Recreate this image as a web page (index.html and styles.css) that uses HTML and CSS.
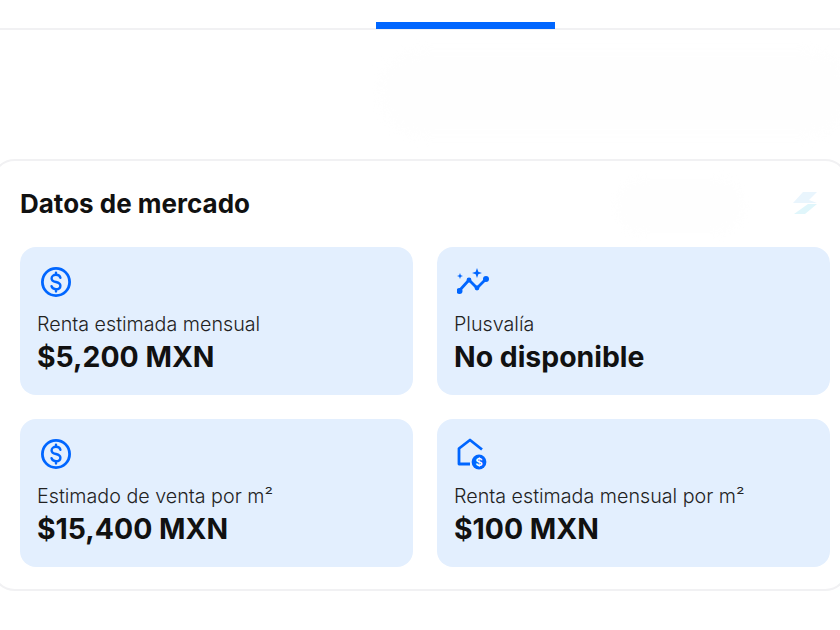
FILE: index.html
```html
<!DOCTYPE html>
<html lang="es">
<head>
    <meta charset="UTF-8">
    <title>Datos de mercado</title>
    <link rel="stylesheet" href="styles.css">
</head>
<body>
    <div class="tabs">
        <div class="tab-active"></div>
    </div>

    <div class="ghost-share"></div>

    <div class="card">
        <div class="ghost-badge"></div>
        <div class="card-head">
            <h2 class="card-title">Datos de mercado</h2>
            <svg class="bolt" width="24" height="23" viewBox="0 0 24 23">
                <path d="M10 0h14l-8 8 8 3H0z" fill="#e9f5fd"/>
                <path d="M15 12h9L12 22H1z" fill="#e0f6fb"/>
            </svg>
        </div>

        <div class="grid">
            <div class="tile">
                <svg class="icon" width="32" height="32" viewBox="0 0 32 32" fill="none" stroke="#0066ff" stroke-width="2.800" stroke-linecap="round">
                    <circle cx="16" cy="16" r="13.600"/>
                    <path d="M20.400 11.800c-.4-1.800-2.200-3-4.400-3-2.500 0-4.400 1.500-4.400 3.600 0 2.300 2 3 4.400 3.600s4.400 1.400 4.400 3.700c0 2.100-1.900 3.500-4.400 3.500-2.300 0-4.100-1.200-4.500-3.100M16 6.600v2.200M16 23.200v2.200" stroke-width="2.400"/>
                </svg>
                <div class="label">Renta estimada mensual</div>
                <div class="value">$5,200 MXN</div>
            </div>

            <div class="tile">
                <svg class="icon" width="32" height="32" viewBox="0 0 32 32" fill="none">
                    <path d="M2 25 12 14l8 8 9-9" stroke="#0066ff" stroke-width="2.800" stroke-linecap="round" stroke-linejoin="round"/>
                    <circle cx="2.500" cy="25" r="3" fill="#0066ff"/>
                    <circle cx="12" cy="14" r="2.400" fill="#0066ff"/>
                    <circle cx="20" cy="22" r="2.400" fill="#0066ff"/>
                    <circle cx="29" cy="13" r="3" fill="#0066ff"/>
                    <path d="M20 2l1.300 3.700L25 7l-3.700 1.300L20 12l-1.300-3.700L15 7l3.700-1.300z" fill="#0066ff"/>
                    <path d="M3 7l.8 2.200L6 10l-2.200.8L3 13l-.8-2.200L0 10l2.200-.8z" fill="#0066ff"/>
                </svg>
                <div class="label">Plusvalía</div>
                <div class="value">No disponible</div>
            </div>

            <div class="tile">
                <svg class="icon" width="32" height="32" viewBox="0 0 32 32" fill="none" stroke="#0066ff" stroke-width="2.800" stroke-linecap="round">
                    <circle cx="16" cy="16" r="13.600"/>
                    <path d="M20.400 11.800c-.4-1.800-2.200-3-4.400-3-2.500 0-4.400 1.500-4.400 3.600 0 2.300 2 3 4.400 3.600s4.400 1.400 4.400 3.700c0 2.100-1.900 3.500-4.400 3.500-2.300 0-4.100-1.200-4.500-3.100M16 6.600v2.200M16 23.200v2.200" stroke-width="2.400"/>
                </svg>
                <div class="label">Estimado de venta por m²</div>
                <div class="value">$15,400 MXN</div>
            </div>

            <div class="tile">
                <svg class="icon" width="32" height="32" viewBox="0 0 32 32" fill="none">
                    <path d="M13 26H2V10.500L13 2l12 9.500" stroke="#0066ff" stroke-width="2.800" stroke-linejoin="round"/>
                    <circle cx="22" cy="24" r="7.400" fill="#0066ff"/>
                    <text x="22" y="28" class="icon-dollar" text-anchor="middle">$</text>
                </svg>
                <div class="label">Renta estimada mensual por m²</div>
                <div class="value">$100 MXN</div>
            </div>
        </div>
    </div>
</body>
</html>
```

FILE: styles.css
```css
html, body {
    margin: 0;
    padding: 0;
    height: 630px;
    overflow: hidden;
    background: #fff;
}
body {
    font-family: "Inter", "Liberation Sans", sans-serif;
    color: #111;
    position: relative;
}

/*TABS*/
.tabs {
    height: 28px;
    border-bottom: 2px solid #f1f1f3;
    padding-left: 376px;
    display: flex;
    align-items: flex-end;
}
.tab-active {
    width: 179px;
    height: 7px;
    margin-bottom: -1px;
    background: #0066ff;
}

/*faint washed out shapes behind the content*/
.ghost-share {
    position: absolute;
    left: 380px;
    top: 50px;
    width: 470px;
    height: 86px;
    border-radius: 43px;
    background: #fefefe;
    filter: blur(6px);
}
.ghost-badge {
    position: absolute;
    left: 622px;
    top: 18px;
    width: 130px;
    height: 54px;
    border-radius: 27px;
    background: #fefefe;
    filter: blur(4px);
}

/*CARD*/
.card {
    position: relative;
    width: 858px;
    height: 432px;
    margin: 129px 0 0 -9px;
    padding: 26px 0 0 27px;
    border: 2px solid #f1f1f3;
    border-radius: 24px;
    box-sizing: border-box;
}
.card-head {
    height: 60px;
    display: flex;
    align-items: flex-start;
}
.card-title {
    margin: 1px 0 0;
    font-size: 26px;
    line-height: 32px;
    font-weight: 700;
}
.bolt {
    position: absolute;
    right: 30px;
    top: 31px;
}

.grid {
    position: relative;
    display: grid;
    grid-template-columns: 393px 393px;
    grid-auto-rows: 148px;
    gap: 24px;
}
.tile {
    background: #e3effe;
    border-radius: 16px;
    padding: 19px 17px 19px 18px;
    box-sizing: border-box;
}
.icon {
    display: block;
    margin-left: 2px;
}
.icon-dollar {
    font-family: "Inter", sans-serif;
    font-size: 11px;
    font-weight: 700;
    fill: #fff;
}
.label {
    margin: 12px 0 0 -1px;
    font-size: 19.7px;
    line-height: 28px;
    font-weight: 300;
    color: #222;
}
.value {
    margin: 1px 0 0 -1px;
    font-size: 28.4px;
    line-height: 36px;
    font-weight: 700;
    color: #111;
}
```
